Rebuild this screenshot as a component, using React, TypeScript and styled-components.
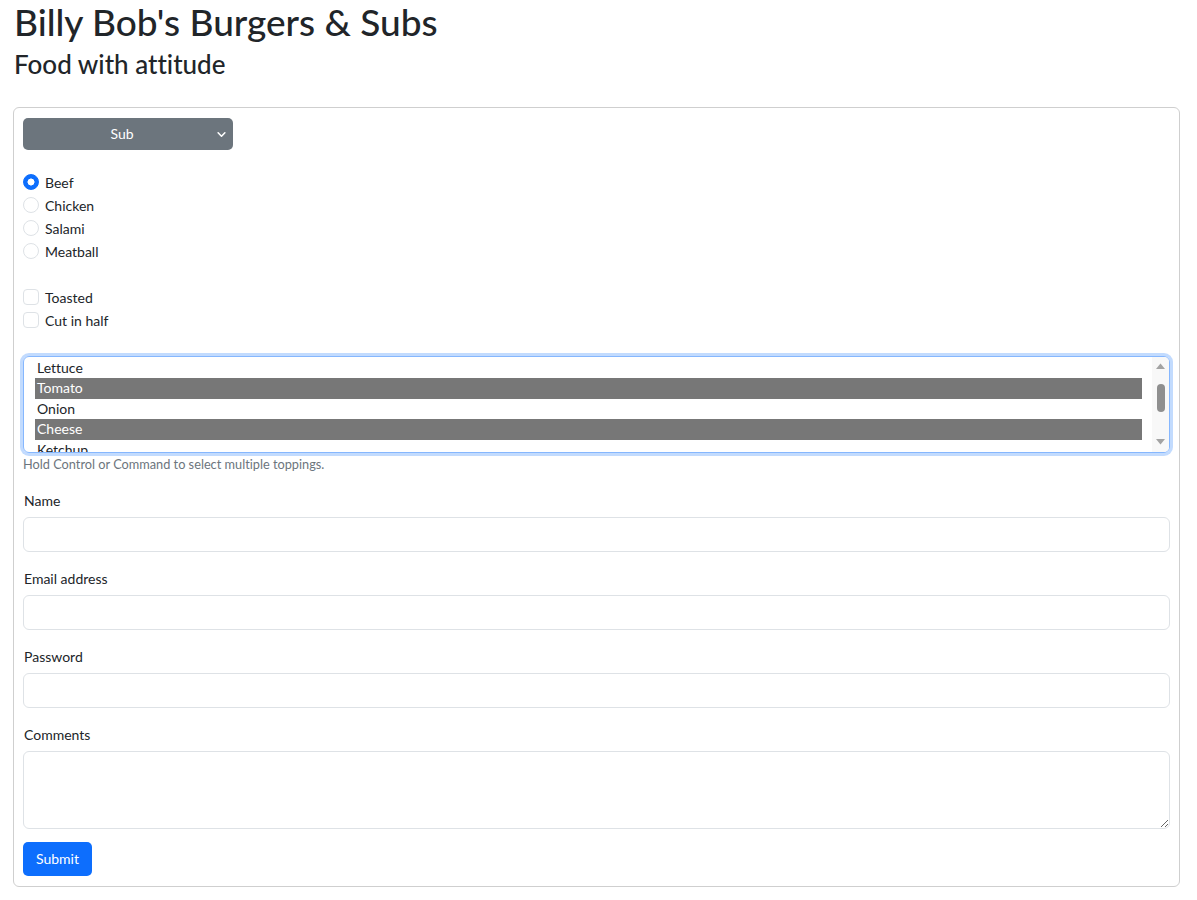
import React from "react";
import styled, { createGlobalStyle } from "styled-components";

const Global = createGlobalStyle`
  html, body { margin: 0; padding: 0; background: #fff; }
  body {
    font-family: Lato, "Noto Sans", sans-serif;
    color: #212529;
    font-size: 14px;
    line-height: 1.5;
    font-variant-ligatures: no-common-ligatures;
  }
  * { box-sizing: border-box; }
`;

const Page = styled.div`
  padding: 0 17px 14px 13px;
`;

const Title = styled.h1`
  margin: 0 0 5px 1px;
  font-size: 37px;
  font-weight: 500;
  line-height: 1.2;
`;

const Subtitle = styled.h4`
  margin: 0 0 0 1px;
  font-size: 26px;
  font-weight: 500;
  line-height: 1.2;
`;

const Card = styled.form`
  margin-top: 26px;
  border: 1px solid #cfcfcf;
  border-radius: 6px;
  padding: 10px 9px 10px 9px;
  display: flex;
  flex-direction: column;
`;

const SelectWrap = styled.div`
  position: relative;
  width: 210px;
  margin-bottom: 22px;
`;

const KindSelect = styled.select`
  appearance: none;
  -webkit-appearance: none;
  width: 100%;
  height: 32px;
  border: none;
  border-radius: 5px;
  background: #6c757d;
  color: #fff;
  font-family: inherit;
  font-size: 14px;
  text-align: center;
  text-align-last: center;
  padding: 0 24px 0 12px;
  outline: none;
`;

const Chevron = styled.svg`
  position: absolute;
  right: 7px;
  top: 12px;
  width: 9px;
  height: 9px;
  pointer-events: none;
`;

const CheckGroup = styled.div<{ $gap: number }>`
  display: flex;
  flex-direction: column;
  gap: 2px;
  margin-bottom: ${(p) => p.$gap}px;
`;

const CheckRow = styled.label`
  display: flex;
  align-items: center;
  height: 21px;
  gap: 6px;
  font-size: 14px;
`;

const Radio = styled.input`
  appearance: none;
  -webkit-appearance: none;
  margin: 0;
  width: 16px;
  height: 16px;
  border-radius: 50%;
  border: 1px solid #dee2e6;
  background: #fff;
  flex-shrink: 0;
  &:checked {
    border-color: #0d6efd;
    background: radial-gradient(circle, #fff 0 3.2px, #0d6efd 3.8px);
  }
`;

const Check = styled.input`
  appearance: none;
  -webkit-appearance: none;
  margin: 0;
  width: 16px;
  height: 16px;
  border-radius: 4px;
  border: 1px solid #dee2e6;
  background: #fff;
  flex-shrink: 0;
`;

const ListBox = styled.div`
  display: flex;
  height: 97px;
  border: 1px solid #86b7fe;
  border-radius: 6px;
  box-shadow: 0 0 0 3px rgba(13, 110, 253, 0.25);
  overflow: hidden;
  margin-top: 2px;
`;

const Options = styled.div`
  flex: 1;
  padding: 1px 10px 0 11px;
  overflow: hidden;
`;

const Option = styled.div<{ $selected?: boolean }>`
  height: 20.6px;
  line-height: 20.6px;
  padding-left: 2px;
  font-size: 14px;
  background: ${(p) => (p.$selected ? "#777777" : "transparent")};
  color: ${(p) => (p.$selected ? "#fff" : "#212529")};
  white-space: nowrap;
`;

const ScrollTrack = styled.div`
  width: 17px;
  background: #f8f8f8;
  display: flex;
  flex-direction: column;
  align-items: center;
  padding: 6px 0 7px;
`;

const Arrow = styled.svg`
  width: 9px;
  height: 6px;
  flex-shrink: 0;
`;

const Thumb = styled.div`
  width: 8px;
  height: 28px;
  border-radius: 4px;
  background: #8f8f8f;
  margin-top: 15px;
  margin-bottom: auto;
`;

const HelpText = styled.div`
  margin-top: 2px;
  font-size: 12.75px;
  line-height: 1.5;
  color: #6c757d;
  margin-bottom: 16px;
`;

const Field = styled.div<{ $last?: boolean }>`
  display: flex;
  flex-direction: column;
  margin-bottom: ${(p) => (p.$last ? 13 : 16)}px;
`;

const Label = styled.label`
  font-size: 14px;
  line-height: 21px;
  margin-bottom: 6px;
  margin-left: 1px;
`;

const TextInput = styled.input`
  height: 35px;
  border: 1px solid #dee2e6;
  border-radius: 6px;
  padding: 6px 12px;
  font-family: inherit;
  font-size: 14px;
  outline: none;
`;

const TextArea = styled.textarea`
  height: 78px;
  border: 1px solid #dee2e6;
  border-radius: 6px;
  padding: 6px 12px;
  font-family: inherit;
  font-size: 14px;
  outline: none;
  resize: vertical;
`;

const SubmitButton = styled.button`
  align-self: flex-start;
  height: 34px;
  width: 69px;
  padding: 0;
  border: none;
  border-radius: 5px;
  background: #0d6efd;
  color: #fff;
  font-family: inherit;
  font-size: 14px;
`;

const toppings = [
  { name: "Lettuce", selected: false },
  { name: "Tomato", selected: true },
  { name: "Onion", selected: false },
  { name: "Cheese", selected: true },
  { name: "Ketchup", selected: false },
  { name: "Mustard", selected: false },
];

export default function App() {
  return (
    <Page>
      <Global />
      <Title>Billy Bob's Burgers &amp; Subs</Title>
      <Subtitle>Food with attitude</Subtitle>
      <Card onSubmit={(e) => e.preventDefault()}>
        <SelectWrap>
          <KindSelect defaultValue="Sub">
            <option>Burger</option>
            <option>Sub</option>
          </KindSelect>
          <Chevron viewBox="0 0 16 16">
            <path d="M2 5l6 6 6-6" fill="none" stroke="#fff" strokeWidth="2.8" strokeLinecap="round" strokeLinejoin="round" />
          </Chevron>
        </SelectWrap>

        <CheckGroup $gap={25}>
          {["Beef", "Chicken", "Salami", "Meatball"].map((m, i) => (
            <CheckRow key={m}>
              <Radio type="radio" name="meat" defaultChecked={i === 0} />
              {m}
            </CheckRow>
          ))}
        </CheckGroup>

        <CheckGroup $gap={23}>
          {["Toasted", "Cut in half"].map((m) => (
            <CheckRow key={m}>
              <Check type="checkbox" />
              {m}
            </CheckRow>
          ))}
        </CheckGroup>

        <ListBox>
          <Options>
            {toppings.map((t) => (
              <Option key={t.name} $selected={t.selected}>
                {t.name}
              </Option>
            ))}
          </Options>
          <ScrollTrack>
            <Arrow viewBox="0 0 9 6">
              <path d="M0 6L4.5 0.5L9 6Z" fill="#a3a3a3" />
            </Arrow>
            <Thumb />
            <Arrow viewBox="0 0 9 6">
              <path d="M0 0L4.5 5.5L9 0Z" fill="#a3a3a3" />
            </Arrow>
          </ScrollTrack>
        </ListBox>
        <HelpText>Hold Control or Command to select multiple toppings.</HelpText>

        <Field>
          <Label>Name</Label>
          <TextInput type="text" />
        </Field>
        <Field>
          <Label>Email address</Label>
          <TextInput type="email" />
        </Field>
        <Field>
          <Label>Password</Label>
          <TextInput type="password" />
        </Field>
        <Field $last>
          <Label>Comments</Label>
          <TextArea />
        </Field>

        <SubmitButton type="submit">Submit</SubmitButton>
      </Card>
    </Page>
  );
}
